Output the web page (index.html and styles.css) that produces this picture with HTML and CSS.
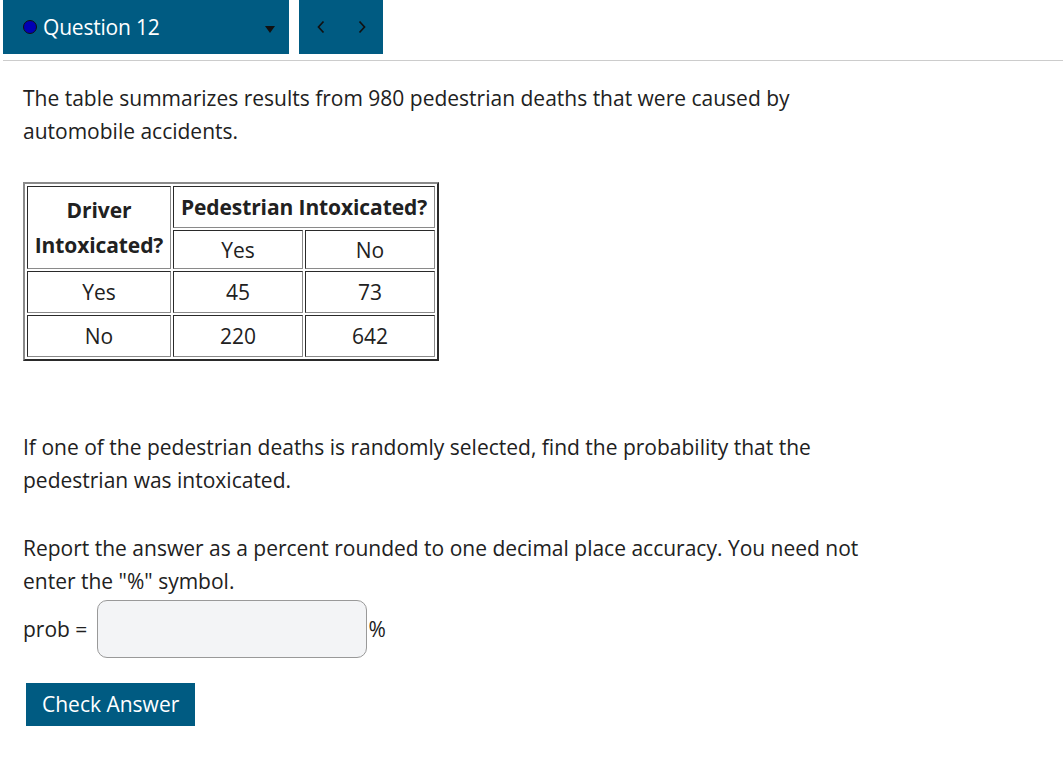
FILE: index.html
```html
<!DOCTYPE html>
<html>
<head>
<meta charset="utf-8">
<link rel="stylesheet" href="styles.css">
</head>
<body>
<div class="topbar">
  <div class="qselect">
    <span class="dot"></span>
    <span class="qlabel">Question 12</span>
    <span class="caret"></span>
  </div>
  <div class="qnav">
    <svg class="arrow" width="8" height="14" viewBox="0 0 8 14"><path d="M6.5 1.5 L1.5 7 L6.5 12.5" fill="none" stroke="#111" stroke-width="1.7"/></svg>
    <svg class="arrow" width="8" height="14" viewBox="0 0 8 14"><path d="M1.5 1.5 L6.5 7 L1.5 12.5" fill="none" stroke="#111" stroke-width="1.7"/></svg>
  </div>
</div>
<div class="rule"></div>
<div class="content">
  <p class="para p1">The table summarizes results from 980 pedestrian deaths that were caused by automobile accidents.</p>
  <table class="data">
    <colgroup>
      <col class="col1">
      <col class="col2">
      <col class="col3">
    </colgroup>
    <tr>
      <th rowspan="2" class="c1">Driver<br>Intoxicated?</th>
      <th colspan="2" class="hdr">Pedestrian Intoxicated?</th>
    </tr>
    <tr>
      <td class="c2">Yes</td>
      <td class="c3">No</td>
    </tr>
    <tr>
      <td>Yes</td>
      <td>45</td>
      <td>73</td>
    </tr>
    <tr>
      <td>No</td>
      <td>220</td>
      <td>642</td>
    </tr>
  </table>
  <p class="para p2">If one of the pedestrian deaths is randomly selected, find the probability that the pedestrian was intoxicated.</p>
  <p class="para p3">Report the answer as a percent rounded to one decimal place accuracy. You need not enter the "%" symbol.</p>
  <div class="answer">
    <span class="lbl">prob =</span>
    <span class="inp"></span>
    <span class="pct">%</span>
  </div>
  <div class="btnrow"><span class="btn">Check Answer</span></div>
</div>
</body>
</html>
```
FILE: styles.css
```css
html, body { margin: 0; padding: 0; background: #fff; }
body {
  font-family: "Open Sans", "Noto Sans", sans-serif;
  color: #212121;
  font-size: 21px;
}
.topbar {
  display: flex;
  padding-left: 3px;
  gap: 10px;
  height: 54px;
}
.qselect {
  width: 286px;
  background: #005b82;
  display: flex;
  align-items: center;
  color: #fff;
  box-sizing: border-box;
  padding-left: 20px;
  padding-right: 14px;
}
.dot {
  width: 12px; height: 12px;
  border-radius: 50%;
  background: #0000b4;
  border: 1.5px solid #111;
  margin-right: 6px;
}
.qlabel { font-size: 21px; flex: 1; letter-spacing: -0.2px; }
.caret {
  width: 0; height: 0;
  border-left: 5px solid transparent;
  border-right: 5px solid transparent;
  border-top: 7px solid #111;
  margin-top: 4px;
}
.qnav {
  width: 84px;
  background: #005b82;
  display: flex;
  align-items: center;
  justify-content: space-between;
  padding: 0 17px 0 18px;
  box-sizing: border-box;
}
.rule {
  margin: 6px 0 0 3px;
  height: 1px;
  background: #cccccc;
}
.content { padding-left: 23px; }
.para {
  margin: 0;
  line-height: 33px;
  max-width: 870px;
}
.p1 { margin-top: 21px; }
.data {
  margin-top: 34px;
  width: 416px;
  table-layout: fixed;
  border-collapse: separate;
  border-spacing: 2px;
  border: 2px solid;
  border-color: #8a8a8a #2a2a2a #2a2a2a #8a8a8a;
  text-align: center;
}
.col1 { width: 144px; }
.col2 { width: 130px; }
.col3 { width: 130px; }
.data th, .data td {
  border: 1px solid;
  border-color: #2a2a2a #8a8a8a #8a8a8a #2a2a2a;
  padding: 0;
  height: 40px;
}
.data th { font-weight: 700; font-size: 21px; letter-spacing: -0.1px; white-space: nowrap; }
.c1 { line-height: 35px; }
.data td.c2, .data td.c3 { height: 37px; }
.p2 { margin-top: 70px; }
.p3 { margin-top: 35px; }
.answer {
  display: flex;
  align-items: center;
  margin-top: 2px;
}
.lbl { margin-right: 10px; }
.inp {
  width: 268px;
  height: 56px;
  border: 1px solid #999;
  border-radius: 10px;
  background: #f3f4f6;
}
.pct { margin-left: 1px; }
.btnrow { margin-top: 25px; padding-left: 3px; }
.btn {
  display: inline-block;
  background: #005b82;
  color: #fff;
  font-size: 21px;
  padding: 0 16px 0 16px;
  line-height: 43px;
}
```
